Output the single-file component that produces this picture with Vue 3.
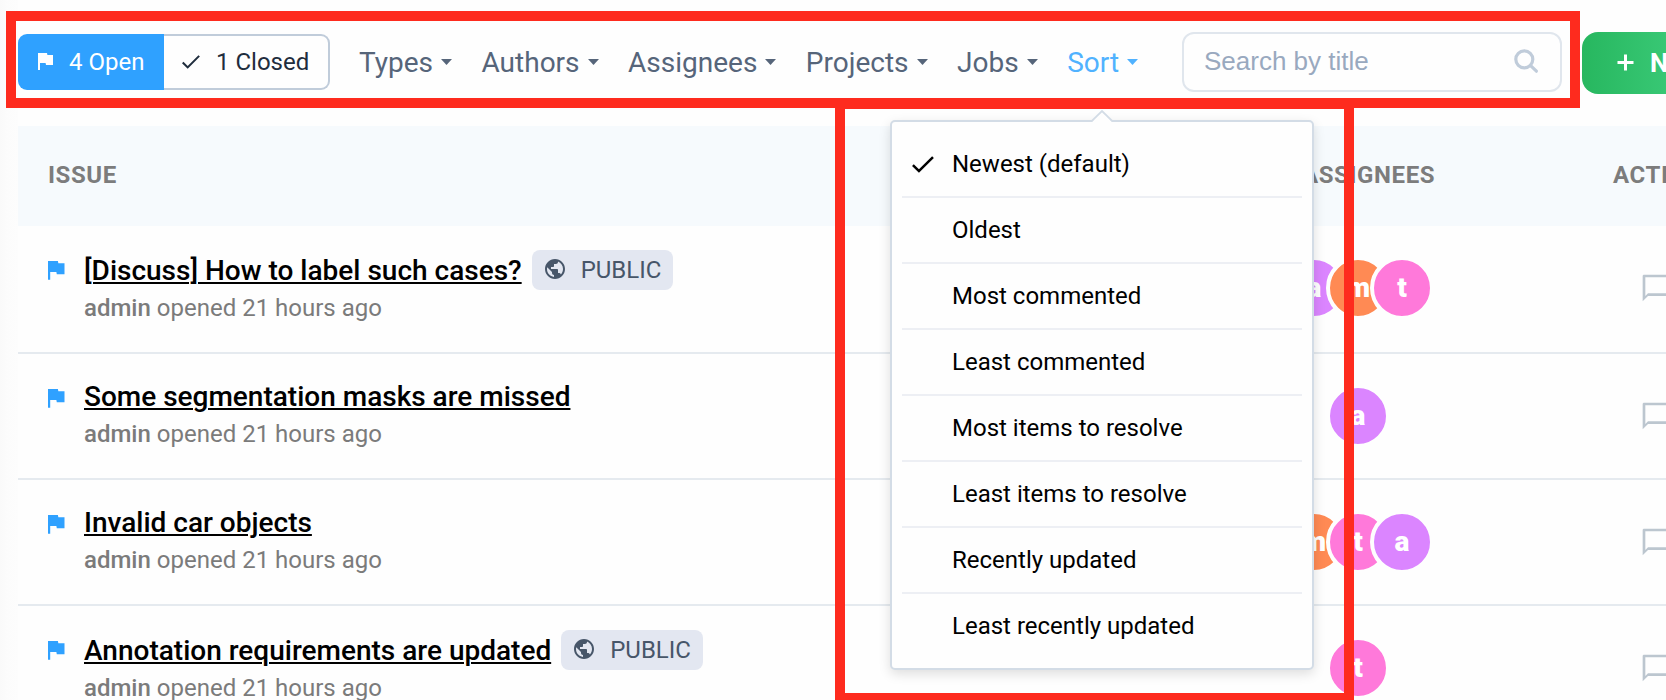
<script setup>
const filters = ['Types', 'Authors', 'Assignees', 'Projects', 'Jobs', 'Sort']

const sortOptions = [
  'Newest (default)',
  'Oldest',
  'Most commented',
  'Least commented',
  'Most items to resolve',
  'Least items to resolve',
  'Recently updated',
  'Least recently updated',
]

const issues = [
  { title: '[Discuss] How to label such cases?', isPublic: true, users: ['a', 'm', 't'] },
  { title: 'Some segmentation masks are missed', isPublic: false, users: ['a'] },
  { title: 'Invalid car objects', isPublic: false, users: ['m', 't', 'a'] },
  { title: 'Annotation requirements are updated', isPublic: true, users: ['t'] },
]
</script>

<template>
  <div class="page">
    <aside class="edge"></aside>
    <main class="content">
      <header class="toolbar">
        <div class="status">
          <button class="status-btn open">
            <svg class="flag-small" viewBox="5 4 15 17"><path d="M14.4 6L14 4H5v17h2v-7h5.6l.4 2h7V6z" /></svg>
            <span>4 Open</span>
          </button>
          <button class="status-btn closed">
            <svg class="check-small" viewBox="3.4 5.5 17.7 13.6"><path d="M9 16.17L4.83 12l-1.42 1.41L9 19 21 7l-1.41-1.41z" /></svg>
            <span>1 Closed</span>
          </button>
        </div>
        <nav class="filters">
          <a v-for="f in filters" :key="f" class="filter" :class="{ active: f === 'Sort' }">
            <span>{{ f }}</span>
            <svg class="caret" viewBox="0 0 11 6"><path d="M0 0h11L5.5 6z" /></svg>
          </a>
        </nav>
        <div class="search">
          <span>Search by title</span>
          <svg class="search-icon" viewBox="0 0 25 25">
            <circle cx="10.3" cy="10.3" r="8.5" />
            <path d="M16.6 16.6l5.8 5.6" />
          </svg>
        </div>
        <button class="new-btn">
          <svg class="plus" viewBox="0 0 17 17"><path d="M8.5 0.5v16M0.5 8.5h16" /></svg>
          <span>NEW</span>
        </button>
      </header>

      <section class="table">
        <div class="row head">
          <span class="h-issue">ISSUE</span>
          <span class="h-assignees">ASSIGNEES</span>
          <span class="h-actions">ACTIONS</span>
        </div>
        <div v-for="i in issues" :key="i.title" class="row issue" :class="{ tall: i.isPublic }">
          <div class="info">
            <svg class="flag" viewBox="5 4 15 17"><path d="M14.4 6L14 4H5v17h2v-7h5.6l.4 2h7V6z" /></svg>
            <div class="texts">
              <div class="title-line">
                <a class="title">{{ i.title }}</a>
                <span v-if="i.isPublic" class="badge">
                  <svg viewBox="0 0 24 24"><path d="M12 2C6.48 2 2 6.48 2 12s4.48 10 10 10 10-4.48 10-10S17.52 2 12 2zm-1 17.93c-3.95-.49-7-3.85-7-7.93 0-.62.08-1.21.21-1.79L9 15v1c0 1.1.9 2 2 2v1.93zm6.9-2.54c-.26-.81-1-1.39-1.9-1.39h-1v-3c0-.55-.45-1-1-1H8v-2h2c.55 0 1-.45 1-1V7h2c1.1 0 2-.9 2-2v-.41c2.93 1.19 5 4.06 5 7.41 0 2.08-.8 3.97-2.1 5.39z" /></svg>
                  <span>PUBLIC</span>
                </span>
              </div>
              <div class="meta"><b>admin</b> opened 21 hours ago</div>
            </div>
          </div>
          <div class="users">
            <span v-for="u in i.users" :key="u" class="avatar" :class="'user-' + u">{{ u }}</span>
          </div>
          <svg class="comment" viewBox="0 0 24 24"><path d="M21 2H3c-.55 0-1 .45-1 1v19l4-4h15c.55 0 1-.45 1-1V3c0-.55-.45-1-1-1zm-1 14H6l-2 2V4h16v12z" /></svg>
        </div>
      </section>
    </main>

    <!-- the open sort menu and the highlight frames lie over the list -->
    <div class="menu">
      <svg class="arrow" viewBox="0 0 22 12"><path class="fill" d="M1 12L11 1.6 21 12z" /><path class="line" d="M0.6 11.2L11 1 21.4 11.2" /></svg>
      <div v-for="(o, n) in sortOptions" :key="o" class="option">
        <span class="mark">
          <svg v-if="n === 0" viewBox="3.4 5.5 17.7 13.6"><path d="M9 16.17L4.83 12l-1.42 1.41L9 19 21 7l-1.41-1.41z" /></svg>
        </span>
        <span>{{ o }}</span>
      </div>
    </div>
    <div class="frame frame-menu"></div>
    <div class="frame frame-toolbar"></div>
  </div>
</template>

<style>
body {
  margin: 0;
  background: #fefefe;
}
</style>

<style scoped>
.page {
  position: relative;
  display: flex;
  width: 1666px;
  height: 700px;
  overflow: hidden;
  background: #fefefe;
  font-family: Roboto, 'Liberation Sans', sans-serif;
  white-space: nowrap;
}
button {
  font-family: inherit;
  margin: 0;
  padding: 0;
  border: 0;
  background: none;
}
.edge {
  flex: none;
  width: 18px;
  background: linear-gradient(to right, #fafafa, #fcfcfc 7px, #fdfdfd);
}
.content {
  flex: none;
  width: 1720px;
}
.toolbar {
  display: flex;
  align-items: flex-start;
  height: 94px;
  padding-top: 32px;
  box-sizing: border-box;
}
.status {
  display: flex;
  margin-top: 2px;
  width: 312px;
  height: 56px;
}
.status-btn {
  display: flex;
  align-items: center;
  box-sizing: border-box;
  height: 56px;
  font-size: 24px;
  line-height: 30px;
}
.open {
  width: 146px;
  padding: 0 0 1px 20px;
  gap: 16px;
  border-radius: 9px 0 0 9px;
  background: #2fa1ff;
  color: #fff;
}
.closed {
  width: 166px;
  padding: 0 0 1px 18px;
  gap: 16px;
  border: 2px solid #c0ccda;
  border-left: 0;
  border-radius: 0 9px 9px 0;
  color: #1f2d3d;
}
.flag-small {
  width: 15px;
  height: 17px;
  fill: #fff;
}
.check-small {
  width: 18px;
  height: 14px;
  fill: #1f2d3d;
}
.filters {
  display: flex;
  gap: 29.5px;
  width: 823px;
  margin-left: 29px;
  padding-top: 14px;
}
.filter {
  display: flex;
  align-items: center;
  gap: 8px;
  height: 32px;
  font-size: 28px;
  color: #56657a;
}
.filter.active {
  color: #50b2ff;
}
.caret {
  width: 11px;
  height: 6px;
  fill: currentColor;
}
.search {
  display: flex;
  align-items: center;
  justify-content: space-between;
  box-sizing: border-box;
  width: 380px;
  height: 60px;
  padding: 0 21px 2px 20px;
  border: 2px solid #e0e6ed;
  border-radius: 12px;
  background: #fefefe;
  color: #99a9bf;
  font: 26px 'Liberation Sans', sans-serif;
}
.search-icon {
  width: 25px;
  height: 25px;
  fill: none;
  stroke: #c0ccda;
  stroke-width: 3.2;
  stroke-linecap: round;
}
.new-btn {
  display: flex;
  align-items: center;
  gap: 16px;
  width: 140px;
  height: 62px;
  margin-left: 20px;
  padding-left: 35px;
  border-radius: 16px;
  background: linear-gradient(to right, #27b75f, #43d282);
  color: #fff;
  font-size: 26px;
  font-weight: 700;
}
.plus {
  width: 17px;
  height: 17px;
  margin-bottom: 1px;
  fill: none;
  stroke: #fff;
  stroke-width: 3;
}
.table {
  margin-top: 32px;
}
.row {
  display: grid;
  grid-template-columns: 1268px 144px 1fr;
  box-sizing: border-box;
}
.head {
  align-items: center;
  height: 100px;
  padding-bottom: 2px;
  background: #f6fafd;
  color: #7c7c7c;
  font-size: 24px;
  font-weight: 700;
  letter-spacing: 0.6px;
}
.h-issue {
  padding-left: 30px;
}
.h-assignees {
  padding-left: 16px;
}
.h-actions {
  padding-left: 183px;
}
.issue {
  height: 126px;
  border-bottom: 2px solid #e5eaef;
}
.issue:nth-child(2) {
  height: 128px;
}
.info {
  display: flex;
  padding-left: 30px;
}
.flag {
  flex: none;
  width: 16.5px;
  height: 18.7px;
  margin: 35px 19.5px 0 0;
  fill: #2fa1ff;
}
.texts {
  padding-top: 26px;
}
.tall .texts {
  padding-top: 24px;
}
.title-line {
  display: flex;
  align-items: center;
  height: 34px;
}
.tall .title-line {
  height: 40px;
}
.title {
  color: #000;
  font-size: 28px;
  font-weight: 500;
  line-height: 34px;
  text-decoration: underline;
  text-decoration-thickness: 2px;
  text-underline-offset: 2px;
}
.tall .title {
  padding-top: 2px;
}
.badge {
  display: flex;
  align-items: center;
  box-sizing: border-box;
  height: 40px;
  margin-left: 10px;
  padding: 0 12px 0 11px;
  gap: 14px;
  border-radius: 8px;
  background: #e3e7f1;
  color: #475669;
  font-size: 24px;
}
.badge svg {
  width: 24px;
  height: 24px;
  margin-bottom: 2px;
  fill: #475669;
}
.meta {
  margin-top: 5px;
  color: #7b7b7b;
  font-size: 24px;
  line-height: 30px;
}
.tall .meta {
  margin-top: 3px;
}
.meta b {
  font-weight: 500;
}
.users {
  display: flex;
  justify-content: center;
  padding-top: 30px;
}
.avatar {
  flex: none;
  width: 56px;
  height: 56px;
  border: 4px solid #fefefe;
  border-radius: 50%;
  color: #fff;
  font-size: 28px;
  font-weight: 900;
  line-height: 56px;
  text-align: center;
}
.avatar + .avatar {
  margin-left: -20px;
}
.user-a {
  background: #db85ff;
}
.user-m {
  background: #ff8a54;
}
.user-t {
  background: #ff79da;
}
.comment {
  width: 32px;
  height: 32px;
  margin: 46px 0 0 210px;
  fill: #bcc6cf;
}
.menu {
  position: absolute;
  left: 890px;
  top: 120px;
  box-sizing: border-box;
  width: 424px;
  height: 550px;
  padding: 10px;
  border: 2px solid #d3dce6;
  border-radius: 5px;
  background: #fefefe;
  box-shadow: 0 4px 12px rgba(0, 0, 0, 0.13);
}
.arrow {
  position: absolute;
  left: 199px;
  top: -12px;
  width: 22px;
  height: 12px;
}
.arrow .fill {
  fill: #fefefe;
}
.arrow .line {
  fill: none;
  stroke: #d3dce6;
  stroke-width: 1.8;
}
.option {
  display: flex;
  align-items: center;
  height: 64px;
  border-bottom: 2px solid #edeff4;
  color: #000;
  font-size: 24px;
}
.option:last-child {
  border-bottom: 0;
}
.mark {
  width: 40px;
  height: 17px;
  padding-left: 10px;
}
.mark svg {
  display: block;
  width: 22px;
  height: 17px;
  fill: #000;
}
.frame {
  position: absolute;
  box-sizing: border-box;
  border: 10px solid #fe2b1e;
}
.frame-toolbar {
  left: 6px;
  top: 11px;
  width: 1574px;
  height: 97px;
}
.frame-menu {
  left: 835px;
  top: 99px;
  width: 519px;
  height: 604px;
}
</style>
